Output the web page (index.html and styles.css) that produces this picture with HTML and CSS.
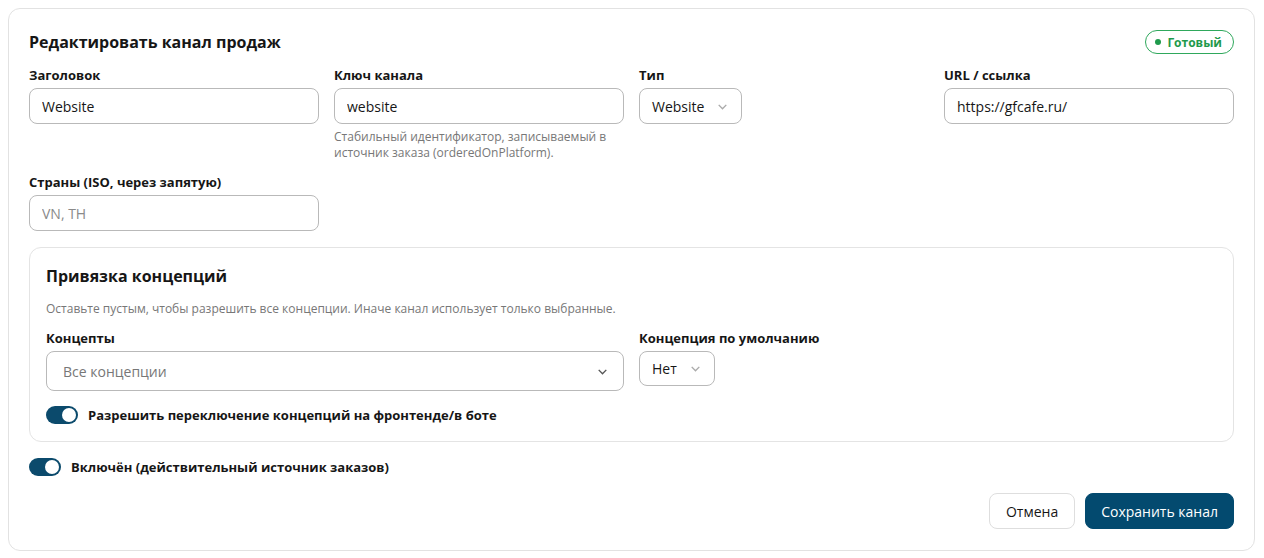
FILE: index.html
```html
<!doctype html>
<html lang="ru">
<head>
    <meta charset="UTF-8">
    <meta name="viewport" content="width=device-width, initial-scale=1.0">
    <title>Редактировать канал продаж</title>
    <link rel="stylesheet" href="styles.css">
</head>
<body>

<!-- Channel edit form -->
<form class="card">
    <div class="card-head">
        <h2 class="card-title">Редактировать канал продаж</h2>
        <span class="badge"><span class="badge-dot"></span>Готовый</span>
    </div>

    <div class="grid">
        <div class="field">
            <label class="label" for="title">Заголовок</label>
            <input class="input" id="title" type="text" value="Website">
        </div>
        <div class="field">
            <label class="label" for="key">Ключ канала</label>
            <input class="input" id="key" type="text" value="website">
            <p class="hint">Стабильный идентификатор, записываемый в источник заказа (orderedOnPlatform).</p>
        </div>
        <div class="field">
            <label class="label" for="type">Тип</label>
            <div class="select select-type" id="type">Website
                <svg class="chevron light" viewBox="0 0 12 12"><path d="M2.5 4.5 6 8l3.5-3.5"/></svg>
            </div>
        </div>
        <div class="field">
            <label class="label" for="url">URL / ссылка</label>
            <input class="input" id="url" type="text" value="https://gfcafe.ru/">
        </div>
        <div class="field">
            <label class="label" for="countries">Страны (ISO, через запятую)</label>
            <input class="input" id="countries" type="text" placeholder="VN, TH">
        </div>
    </div>

    <!-- Concept binding -->
    <div class="panel">
        <h3 class="panel-title">Привязка концепций</h3>
        <p class="panel-desc">Оставьте пустым, чтобы разрешить все концепции. Иначе канал использует только выбранные.</p>
        <div class="grid panel-grid">
            <div class="field span-2">
                <label class="label">Концепты</label>
                <div class="select select-wide">
                    <span class="placeholder">Все концепции</span>
                    <svg class="chevron" viewBox="0 0 12 12"><path d="M2.5 4.5 6 8l3.5-3.5"/></svg>
                </div>
            </div>
            <div class="field">
                <label class="label">Концепция по умолчанию</label>
                <div class="select select-small">Нет
                    <svg class="chevron light" viewBox="0 0 12 12"><path d="M2.5 4.5 6 8l3.5-3.5"/></svg>
                </div>
            </div>
        </div>
        <div class="switch-row">
            <span class="switch"><span class="knob"></span></span>
            <span class="switch-label">Разрешить переключение концепций на фронтенде/в боте</span>
        </div>
    </div>

    <div class="switch-row outer">
        <span class="switch"><span class="knob"></span></span>
        <span class="switch-label">Включён (действительный источник заказов)</span>
    </div>

    <div class="actions">
        <button type="button" class="btn btn-cancel">Отмена</button>
        <button type="button" class="btn btn-save">Сохранить канал</button>
    </div>
</form>

</body>
</html>
```

FILE: styles.css
```css
body {
    margin: 8px;
    font-family: "Open Sans", "Noto Sans", sans-serif;
    color: #161616;
    background: #fff;
}
.card {
    border: 1px solid #e2e2e2;
    border-radius: 12px;
    padding: 21px 20px 21px;
    width: 1247px;
    box-sizing: border-box;
}
.card-head {
    display: flex;
    justify-content: space-between;
    align-items: center;
    height: 24px;
    margin-bottom: 12px;
}
.card-title {
    margin: 0;
    font-size: 16px;
    font-weight: 700;
    line-height: 24px;
}
.badge {
    display: inline-flex;
    align-items: center;
    gap: 6px;
    height: 24px;
    box-sizing: border-box;
    padding: 0 11px 0 9px;
    border: 1px solid #2fa85c;
    border-radius: 12px;
    color: #1f9a4c;
    font-size: 12px;
    font-weight: 700;
}
.badge-dot {
    width: 6px;
    height: 6px;
    border-radius: 50%;
    background: #1f9a4c;
}
.grid {
    display: grid;
    grid-template-columns: repeat(4, 1fr);
    column-gap: 15px;
    row-gap: 12px;
    align-items: start;
}
.field {
    display: flex;
    flex-direction: column;
    align-items: flex-start;
}
.span-2 {
    grid-column: span 2;
}
.label {
    font-size: 13px;
    font-weight: 700;
    line-height: 18px;
    margin-bottom: 4px;
}
.input {
    width: 100%;
    height: 36px;
    box-sizing: border-box;
    border: 1px solid #b9b9b9;
    border-radius: 8px;
    padding: 0 12px;
    font-family: inherit;
    font-size: 14px;
    color: #161616;
}
.input::placeholder {
    color: #8a8a8a;
}
.hint {
    margin: 5px 0 0;
    font-size: 12px;
    line-height: 16px;
    color: #777;
    padding-right: 10px;
}
.select {
    display: flex;
    align-items: center;
    box-sizing: border-box;
    border: 1px solid #b9b9b9;
    border-radius: 8px;
    font-size: 14px;
}
.select-type {
    height: 36px;
    padding: 0 12px;
    gap: 12px;
}
.select-small {
    height: 35px;
    padding: 0 12px;
    gap: 12px;
}
.select-wide {
    width: 100%;
    height: 40px;
    padding: 0 14px 0 16px;
    justify-content: space-between;
}
.placeholder {
    color: #777;
}
.chevron {
    width: 13px;
    height: 13px;
    fill: none;
    stroke: #555;
    stroke-width: 1.3;
}
.chevron.light {
    stroke: #aaa;
}
.panel {
    margin-top: 16px;
    border: 1px solid #e4e4e4;
    border-radius: 12px;
    padding: 16px 16px 17px;
}
.panel-title {
    margin: 0;
    font-size: 16px;
    font-weight: 700;
    line-height: 24px;
}
.panel-desc {
    margin: 13px 0 12px;
    font-size: 12px;
    line-height: 16px;
    color: #777;
}
.switch-row {
    display: flex;
    align-items: center;
    gap: 10px;
    margin-top: 15px;
}
.switch-row.outer {
    margin-top: 16px;
}
.switch {
    display: flex;
    justify-content: flex-end;
    align-items: center;
    width: 32px;
    height: 18px;
    box-sizing: border-box;
    padding: 2px;
    border-radius: 9px;
    background: #0b4a6c;
}
.knob {
    width: 14px;
    height: 14px;
    border-radius: 50%;
    background: #fff;
}
.switch-label {
    font-size: 13px;
    font-weight: 700;
    line-height: 18px;
}
.actions {
    display: flex;
    justify-content: flex-end;
    gap: 10px;
    margin-top: 17px;
}
.btn {
    height: 36px;
    border-radius: 8px;
    font-family: inherit;
    font-size: 14px;
    cursor: pointer;
}
.btn-cancel {
    padding: 0 16px;
    background: #fff;
    border: 1px solid #dedede;
    color: #161616;
}
.btn-save {
    padding: 0 15px;
    background: #034a6f;
    border: 1px solid #034a6f;
    color: #fff;
}
```
